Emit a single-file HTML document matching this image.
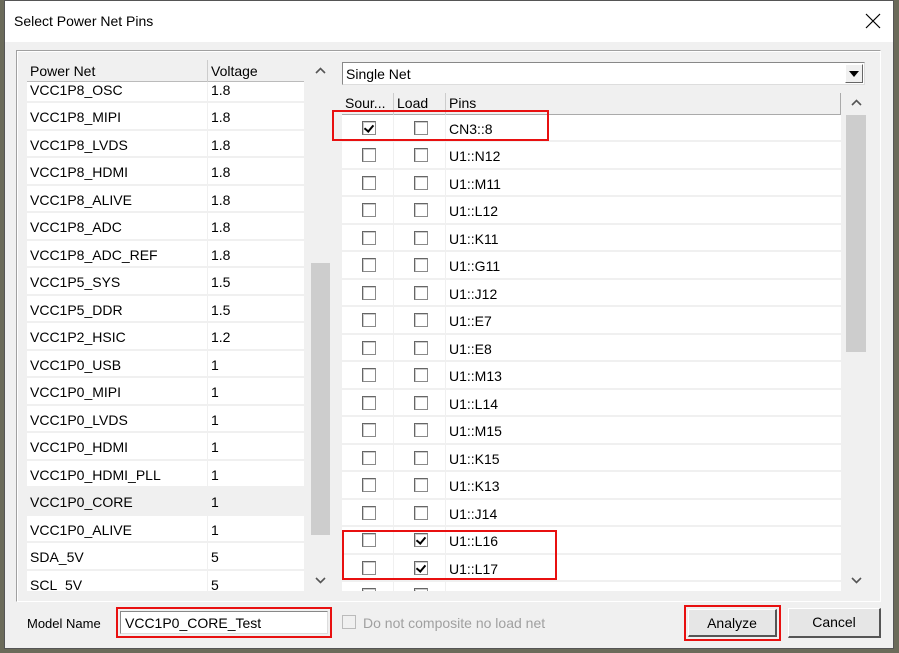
<!DOCTYPE html>
<html><head><style>
*{box-sizing:border-box;margin:0;padding:0}
body{width:899px;height:653px;background:#6b6b5a;font-family:"Liberation Sans",sans-serif;font-size:14px;color:#000;position:relative;overflow:hidden}
.a{position:absolute}
.win{left:4px;top:0;width:890px;height:649px;background:#f0f0f0;border:1px solid #555}
.title{left:5px;top:1px;width:888px;height:41px;background:#fff}
.row{position:absolute;left:0;height:27.5px;border-bottom:2px solid #f0f0f0;width:100%}
.row span{position:absolute;top:6px}
.cb{position:absolute;width:14px;height:14px;border:1px solid #8a8a8a;border-top-color:#666;border-left-color:#666;background:#fff;box-shadow:inset 1px 1px 0 #ccc}
.cb.c::after{content:"";position:absolute;left:3px;top:1px;width:4px;height:7px;border:solid #000;border-width:0 2px 2px 0;transform:rotate(40deg)}
.red{border:2px solid #e81010}
</style></head><body>
<div class="a win"></div>
<div class="a title"></div>
<div class="a" style="left:14px;top:13px;font-size:14px">Select Power Net Pins</div>
<svg class="a" style="left:865px;top:13px" width="16" height="16"><path d="M1 1L15 15M15 1L1 15" stroke="#000" stroke-width="1.2"/></svg>
<div class="a" style="left:16px;top:50px;width:865px;height:552px;border:1px solid #a0a0a0;border-right-color:#fff;border-bottom-color:#fff;box-shadow:inset 1px 1px 0 #fff"></div>

<!-- left list -->
<div class="a" style="left:27px;top:60px;width:277px;height:531px;background:#fff;overflow:hidden">
 <div class="a" style="left:0;top:0;width:277px;height:22px;background:#f0f0f0;border-bottom:1px solid #bbb;z-index:2">
  <span class="a" style="left:3px;top:3px">Power Net</span>
  <div class="a" style="left:180px;top:0;width:1px;height:22px;background:#ccc"></div>
  <span class="a" style="left:184px;top:3px">Voltage</span>
 </div>
 <div class="a" style="left:0;top:15.5px;width:277px;height:560px">
  <div class="row" style="top:0"><span style="left:3px">VCC1P8_OSC</span><span style="left:184px">1.8</span></div>
  <div class="row" style="top:27.5px"><span style="left:3px">VCC1P8_MIPI</span><span style="left:184px">1.8</span></div>
  <div class="row" style="top:55px"><span style="left:3px">VCC1P8_LVDS</span><span style="left:184px">1.8</span></div>
  <div class="row" style="top:82.5px"><span style="left:3px">VCC1P8_HDMI</span><span style="left:184px">1.8</span></div>
  <div class="row" style="top:110px"><span style="left:3px">VCC1P8_ALIVE</span><span style="left:184px">1.8</span></div>
  <div class="row" style="top:137.5px"><span style="left:3px">VCC1P8_ADC</span><span style="left:184px">1.8</span></div>
  <div class="row" style="top:165px"><span style="left:3px">VCC1P8_ADC_REF</span><span style="left:184px">1.8</span></div>
  <div class="row" style="top:192.5px"><span style="left:3px">VCC1P5_SYS</span><span style="left:184px">1.5</span></div>
  <div class="row" style="top:220px"><span style="left:3px">VCC1P5_DDR</span><span style="left:184px">1.5</span></div>
  <div class="row" style="top:247.5px"><span style="left:3px">VCC1P2_HSIC</span><span style="left:184px">1.2</span></div>
  <div class="row" style="top:275px"><span style="left:3px">VCC1P0_USB</span><span style="left:184px">1</span></div>
  <div class="row" style="top:302.5px"><span style="left:3px">VCC1P0_MIPI</span><span style="left:184px">1</span></div>
  <div class="row" style="top:330px"><span style="left:3px">VCC1P0_LVDS</span><span style="left:184px">1</span></div>
  <div class="row" style="top:357.5px"><span style="left:3px">VCC1P0_HDMI</span><span style="left:184px">1</span></div>
  <div class="row" style="top:385px"><span style="left:3px">VCC1P0_HDMI_PLL</span><span style="left:184px">1</span></div>
  <div class="row" style="top:412.5px;background:#f0f0f0"><span style="left:3px">VCC1P0_CORE</span><span style="left:184px">1</span></div>
  <div class="row" style="top:440px"><span style="left:3px">VCC1P0_ALIVE</span><span style="left:184px">1</span></div>
  <div class="row" style="top:467.5px"><span style="left:3px">SDA_5V</span><span style="left:184px">5</span></div>
  <div class="row" style="top:495px"><span style="left:3px">SCL_5V</span><span style="left:184px">5</span></div>
  <div class="a" style="left:180px;top:0;width:1px;height:560px;background:#f0f0f0"></div>
 </div>
</div>
<div class="a" style="left:311px;top:263px;width:19px;height:272px;background:#cdcdcd"></div>
<svg class="a" style="left:315px;top:67px" width="11" height="8"><path d="M1 6L5.5 1.5L10 6" stroke="#555" stroke-width="1.6" fill="none"/></svg>
<svg class="a" style="left:315px;top:576px" width="11" height="8"><path d="M1 2L5.5 6.5L10 2" stroke="#555" stroke-width="1.6" fill="none"/></svg>

<!-- combo -->
<div class="a" style="left:342px;top:62px;width:523px;height:23px;background:#fff;border:1px solid #888;border-right-color:#ddd;border-bottom-color:#ddd"><span class="a" style="left:3px;top:3px">Single Net</span>
 <div class="a" style="left:502px;top:1px;width:18px;height:19px;background:#f0f0f0;border:1px solid #fff;border-right-color:#666;border-bottom-color:#666"><svg class="a" style="left:3px;top:6px" width="10" height="6"><path d="M0 0H10L5 6Z" fill="#000"/></svg></div>
</div>

<!-- grid -->
<div class="a" style="left:342px;top:93px;width:499px;height:498px;background:#fff;overflow:hidden">
 <div class="a" style="left:0;top:0;width:499px;height:22px;background:#f0f0f0;border-bottom:1px solid #aaa;border-right:1px solid #aaa">
  <span class="a" style="left:3px;top:2px">Sour...</span>
  <div class="a" style="left:51px;top:0;width:1px;height:22px;background:#ccc"></div>
  <span class="a" style="left:55px;top:2px">Load</span>
  <div class="a" style="left:103px;top:0;width:1px;height:22px;background:#ccc"></div>
  <span class="a" style="left:107px;top:2px">Pins</span>
 </div>
 <div class="a" style="left:0;top:21.5px;width:499px;height:500px" id="g"></div>
</div>
<div class="a" style="left:846px;top:115px;width:20px;height:237px;background:#cdcdcd"></div>
<svg class="a" style="left:851px;top:99px" width="11" height="8"><path d="M1 6L5.5 1.5L10 6" stroke="#555" stroke-width="1.6" fill="none"/></svg>
<svg class="a" style="left:851px;top:576px" width="11" height="8"><path d="M1 2L5.5 6.5L10 2" stroke="#555" stroke-width="1.6" fill="none"/></svg>

<div class="a red" style="left:332px;top:110px;width:217px;height:31px"></div>
<div class="a red" style="left:342px;top:530px;width:215px;height:50px"></div>

<!-- bottom -->
<div class="a" style="left:27px;top:616px;font-size:13px">Model Name</div>
<div class="a red" style="left:116px;top:607px;width:216px;height:31px;padding:2px"><div style="width:100%;height:100%;background:#fff;border:1px solid #888;border-right-color:#ddd;border-bottom-color:#ddd;padding:3px 4px;font-size:14px">VCC1P0_CORE_Test</div></div>
<div class="a" style="left:342px;top:615px;width:14px;height:14px;border:1px solid #bbb;background:#f0f0f0"></div>
<div class="a" style="left:363px;top:615px;color:#a0a0a0">Do not composite no load net</div>
<div class="a red" style="left:684px;top:605px;width:97px;height:36px;padding:2px"><div style="width:100%;height:100%;background:#e6e6e6;border:1px solid #fff;border-right:2px solid #555;border-bottom:2px solid #555;text-align:center;line-height:26px">Analyze</div></div>
<div class="a" style="left:788px;top:608px;width:93px;height:30px;background:#e6e6e6;border:1px solid #fff;border-right:2px solid #555;border-bottom:2px solid #555;text-align:center;line-height:26px">Cancel</div>

<script>
var p=["CN3::8","U1::N12","U1::M11","U1::L12","U1::K11","U1::G11","U1::J12","U1::E7","U1::E8","U1::M13","U1::L14","U1::M15","U1::K15","U1::K13","U1::J14","U1::L16","U1::L17",""];
var h="";
for(var i=0;i<p.length;i++){var t=i*27.5;
h+='<div class="row" style="top:'+t+'px"><div class="cb'+(i==0?' c':'')+'" style="left:20px;top:6px"></div><div class="cb'+(i==15||i==16?' c':'')+'" style="left:72px;top:6px"></div><span style="left:107px">'+p[i]+'</span><div style="position:absolute;left:51px;top:0;width:1px;height:27px;background:#f0f0f0"></div><div style="position:absolute;left:103px;top:0;width:1px;height:27px;background:#f0f0f0"></div></div>';}
document.getElementById("g").innerHTML=h;
</script>
</body></html>
